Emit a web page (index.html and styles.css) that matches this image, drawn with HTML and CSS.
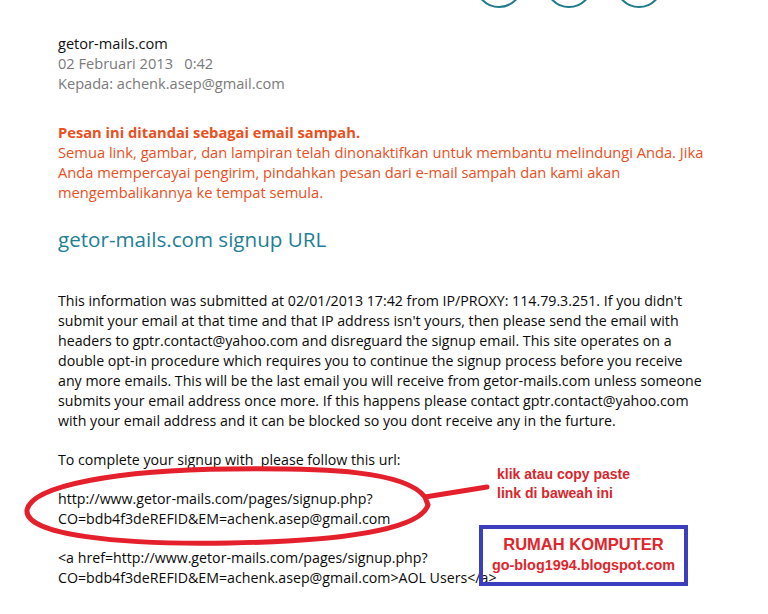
FILE: index.html
```html
<!DOCTYPE html>
<html>
<head>
<meta charset="utf-8">
<link rel="stylesheet" href="styles.css">
</head>
<body>
<div class="page">
  <div class="toolbar">
    <span class="circle"></span>
    <span class="circle"></span>
    <span class="circle"></span>
  </div>
  <div class="mail">
    <div class="meta">
      <div class="from">getor-mails.com</div>
      <div class="gray">02 Februari 2013&nbsp;&nbsp; 0:42</div>
      <div class="gray">Kepada: achenk.asep@gmail.com</div>
    </div>
    <div class="junk">
      <div class="junk-title">Pesan ini ditandai sebagai email sampah.</div>
      <div>Semua link, gambar, dan lampiran telah dinonaktifkan untuk membantu melindungi Anda. Jika<br>Anda mempercayai pengirim, pindahkan pesan dari e-mail sampah dan kami akan<br>mengembalikannya ke tempat semula.</div>
    </div>
    <h1 class="subject">getor-mails.com signup URL</h1>
    <div class="body">
      <p>This information was submitted at 02/01/2013 17:42 from IP/PROXY: 114.79.3.251. If you didn't<br>submit your email at that time and that IP address isn't yours, then please send the email with<br>headers to gptr.contact@yahoo.com and disreguard the signup email. This site operates on a<br>double opt-in procedure which requires you to continue the signup process before you receive<br>any more emails. This will be the last email you will receive from getor-mails.com unless someone<br>submits your email address once more. If this happens please contact gptr.contact@yahoo.com<br>with your email address and it can be blocked so you dont receive any in the furture.</p>
      <p>To complete your signup with&nbsp; please follow this url:</p>
      <p>http://www.getor-mails.com/pages/signup.php?<br>CO=bdb4f3deREFID&amp;EM=achenk.asep@gmail.com</p>
      <p>&lt;a href=http://www.getor-mails.com/pages/signup.php?<br>CO=bdb4f3deREFID&amp;EM=achenk.asep@gmail.com&gt;AOL Users&lt;/a&gt;</p>
    </div>
  </div>

  <svg class="ink" width="768" height="614" viewBox="0 0 768 614">
    <path d="M425 497 C 405 471, 330 468, 230 469 C 120 470, 32 485, 27 510 C 24 535, 120 545, 230 543 C 340 541, 420 530, 428 505 L 425 497 L 487 487" fill="none" stroke="#e3202b" stroke-width="5" stroke-linecap="round" stroke-linejoin="round"/>
  </svg>
  <div class="note">klik atau copy paste<br>link di baweah ini</div>
  <div class="stamp">
    <div class="stamp-title">RUMAH KOMPUTER</div>
    <div class="stamp-url">go-blog1994.blogspot.com</div>
  </div>
</div>
</body>
</html>
```
FILE: styles.css
```css
html, body {
  margin: 0;
  padding: 0;
  background: #ffffff;
}
.page {
  position: relative;
  width: 768px;
  height: 614px;
  overflow: hidden;
}
.toolbar {
  display: flex;
  gap: 22px;
  padding-left: 475px;
  height: 8px;
  overflow: hidden;
}
.circle {
  flex: none;
  width: 44px;
  height: 44px;
  margin-top: -40px;
  border: 2px solid #1f7a8a;
  border-radius: 50%;
}
.mail {
  padding: 25px 0 0 58px;
}
.meta {
  font-family: "Open Sans", "Noto Sans", sans-serif;
  font-size: 14.6px;
  line-height: 20px;
}
.from {
  color: #111111;
}
.gray {
  color: #7a7a7a;
}
.junk {
  margin-top: 29px;
  font-family: "Open Sans", "Noto Sans", sans-serif;
  font-size: 14.7px;
  line-height: 20px;
  color: #e8501e;
  white-space: nowrap;
}
.junk-title {
  font-weight: 700;
}
.subject {
  margin: 24px 0 0 0;
  font-family: "Open Sans", "Noto Sans", sans-serif;
  font-weight: 400;
  font-size: 20.6px;
  line-height: 26px;
  color: #1e8095;
}
.body {
  margin-top: 39px;
  font-family: "Open Sans", "Noto Sans", sans-serif;
  font-size: 14.2px;
  line-height: 20px;
  color: #0a0a0a;
  white-space: nowrap;
}
.body p {
  margin: 0 0 19px 0;
}
.ink {
  position: absolute;
  left: 0;
  top: 0;
  pointer-events: none;
}
.note {
  position: absolute;
  left: 497px;
  top: 465px;
  font-family: "Liberation Sans", Arial, sans-serif;
  font-weight: 700;
  font-size: 14px;
  line-height: 19px;
  color: #d8262c;
}
.stamp {
  position: absolute;
  left: 479px;
  top: 525px;
  width: 201px;
  height: 53px;
  border: 4px solid #3c3fbd;
  display: flex;
  flex-direction: column;
  align-items: center;
  justify-content: center;
  font-family: "Liberation Sans", Arial, sans-serif;
  font-weight: 700;
  color: #e0262c;
}
.stamp-title {
  font-size: 16.5px;
  line-height: 22px;
  margin-top: -4px;
}
.stamp-url {
  font-size: 14.4px;
  line-height: 20px;
}
```
